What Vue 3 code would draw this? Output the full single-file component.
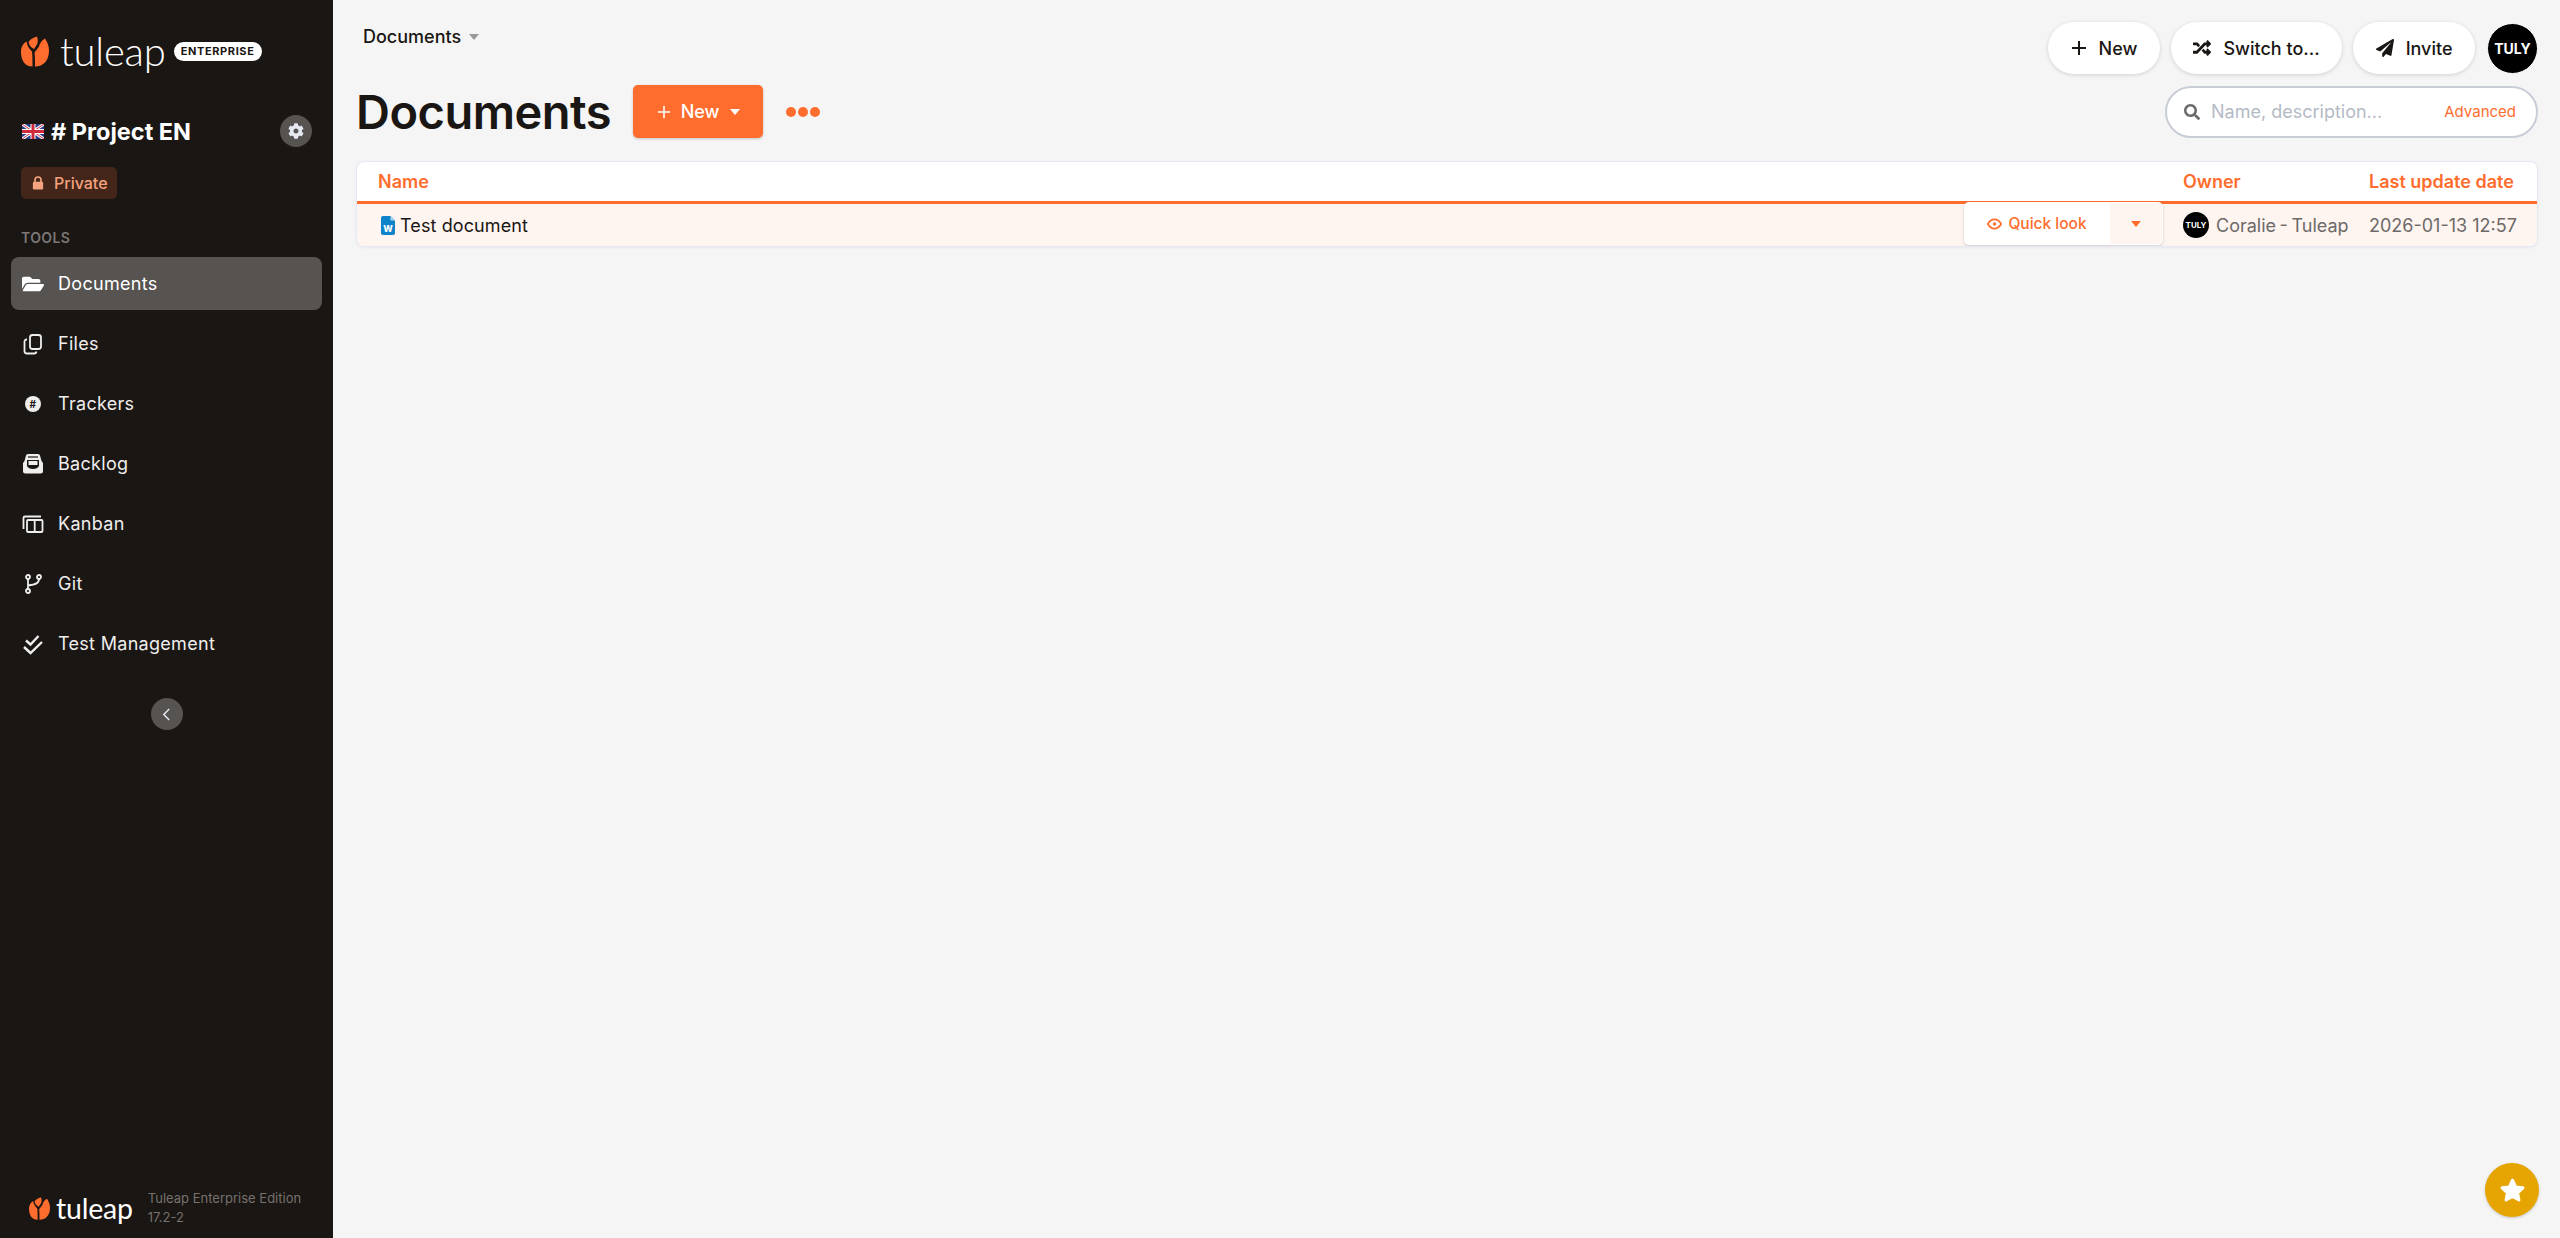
<template>
  <div class="layout">
    <aside class="sidebar">
      <div class="brand">
        <svg class="tulip" viewBox="0 0 28 30">
          <path d="M11.500 30C4 30 0 24 0 15 0 11 2 7 5.500 5 6 9 8 12 11 15c.5 4 .5 10 .5 15z" fill="#ff6d2e" />
          <path d="M7.500 5.500C9 3 12 1 16 0c1 3 1 6 0 8l-3 4.500C10 11 8 9 7.500 5.500z" fill="#ff6d2e" />
          <path d="M14 30c8.500 0 14-6 14-16 0-5-2-9-4-12-3 1.500-5.500 5-6 8l-4.500 6c.5 4 .5 9 .5 14z" fill="#ff6d2e" />
        </svg>
        <span class="wordmark">tuleap</span>
        <span class="edition">ENTERPRISE</span>
      </div>

      <div class="project-row">
        <svg class="flag" viewBox="0 0 22 15">
          <rect width="22" height="15" rx="1.500" fill="#27408b" />
          <path d="M0 0l22 15M22 0L0 15" stroke="#fff" stroke-width="3" />
          <path d="M0 0l22 15M22 0L0 15" stroke="#cf2a3c" stroke-width="1" />
          <path d="M11 0v15M0 7.500h22" stroke="#fff" stroke-width="5" />
          <path d="M11 0v15M0 7.500h22" stroke="#cf2a3c" stroke-width="3" />
        </svg>
        <span class="project-name"># Project EN</span>
        <span class="round-btn gear">
          <svg viewBox="0 0 512 512" width="16" height="16"><path fill="#e6e8f2" d="M487.400 315.700l-42.600-24.600c4.300-23.200 4.300-47 0-70.200l42.600-24.600c4.900-2.800 7.100-8.600 5.500-14-11.100-35.600-30-67.800-54.700-94.600-3.800-4.100-10-5.100-14.800-2.300L380.800 110c-17.900-15.400-38.500-27.300-60.800-35.100V25.800c0-5.600-3.900-10.500-9.400-11.700-36.700-8.200-74.300-7.800-109.200 0-5.500 1.200-9.400 6.100-9.400 11.700V75c-22.200 7.900-42.800 19.800-60.800 35.100L88.700 85.500c-4.900-2.800-11-1.900-14.800 2.300-24.700 26.700-43.600 58.900-54.700 94.600-1.700 5.400.6 11.200 5.500 14L67.300 221c-4.300 23.200-4.300 47 0 70.200l-42.600 24.600c-4.900 2.800-7.100 8.600-5.500 14 11.100 35.600 30 67.800 54.700 94.600 3.800 4.100 10 5.100 14.800 2.300l42.600-24.600c17.900 15.400 38.500 27.300 60.800 35.100v49.200c0 5.600 3.900 10.500 9.400 11.700 36.700 8.200 74.300 7.800 109.200 0 5.500-1.200 9.400-6.100 9.400-11.700v-49.200c22.200-7.900 42.800-19.800 60.800-35.100l42.600 24.600c4.900 2.800 11 1.900 14.800-2.300 24.700-26.700 43.600-58.900 54.700-94.600 1.500-5.500-.7-11.300-5.600-14.100zM256 336c-44.100 0-80-35.900-80-80s35.900-80 80-80 80 35.900 80 80-35.900 80-80 80z" /></svg>
        </span>
      </div>

      <div class="private">
        <svg viewBox="0 0 14 16" width="12" height="14">
          <path d="M3.500 7V4.500a3.500 3.500 0 0 1 7 0V7" fill="none" stroke="#f5a27e" stroke-width="2" />
          <rect x="1" y="6.500" width="12" height="9" rx="1.500" fill="#f5a27e" />
        </svg>
        Private
      </div>

      <div class="tools-title">TOOLS</div>

      <nav class="tools">
        <a class="tool active">
          <svg class="tool-icon" viewBox="0 0 576 512"><path fill="currentColor" d="M572.694 292.093L500.270 416.248A63.997 63.997 0 0 1 444.989 448H45.025c-18.523 0-30.064-20.093-20.731-36.093l72.424-124.155A64 64 0 0 1 152 256h399.964c18.523 0 30.064 20.093 20.730 36.093zM152 224h328v-48c0-26.510-21.490-48-48-48H272l-64-64H48C21.490 64 0 85.490 0 112v278.046l69.077-118.418C86.214 242.250 117.989 224 152 224z" /></svg>
          Documents
        </a>
        <a class="tool">
          <svg class="tool-icon" viewBox="0 0 22 22" fill="none" stroke="currentColor" stroke-width="1.800">
            <rect x="8" y="2" width="11" height="14" rx="2.500" />
            <path d="M5 6.500H4.500A2 2 0 0 0 2.500 8.500V18a2.500 2.500 0 0 0 2.500 2.500h7a2.500 2.500 0 0 0 2.500-2" />
          </svg>
          Files
        </a>
        <a class="tool">
          <svg class="tool-icon" viewBox="0 0 22 22">
            <circle cx="11" cy="11" r="8" fill="currentColor" />
            <text x="11" y="14.500" class="hash">#</text>
          </svg>
          Trackers
        </a>
        <a class="tool">
          <svg class="tool-icon" viewBox="0 0 22 22">
            <path fill="currentColor" d="M2.500 8L4 2.500A2 2 0 0 1 6 1h10a2 2 0 0 1 2 1.500L19.500 8l1.500 2v8a2.500 2.500 0 0 1-2.500 2.500h-15A2.500 2.500 0 0 1 1 18v-8z" />
            <path d="M6 4h10" stroke="#1a1613" stroke-width="1.200" />
            <path d="M5 7h12v6c-1 2-3 3-6 3s-5-1-6-3z" fill="#1a1613" />
            <path d="M6.500 8h9v4h-9z" fill="currentColor" />
          </svg>
          Backlog
        </a>
        <a class="tool">
          <svg class="tool-icon" viewBox="0 0 22 22" fill="none" stroke="currentColor" stroke-width="1.800">
            <path d="M1.500 16V5A1.500 1.500 0 0 1 3 3.500h16" />
            <rect x="5" y="7" width="15.500" height="12" rx="1" />
            <path d="M12.700 7v12" />
          </svg>
          Kanban
        </a>
        <a class="tool">
          <svg class="tool-icon" viewBox="0 0 22 22" fill="none" stroke="currentColor" stroke-width="1.800">
            <circle cx="6" cy="4" r="2" />
            <circle cx="6" cy="18" r="2" />
            <circle cx="17" cy="4" r="2" />
            <path d="M6 6v10M17 6c0 4-3 5.500-11 6.500" />
          </svg>
          Git
        </a>
        <a class="tool">
          <svg class="tool-icon" viewBox="0 0 22 22" fill="none" stroke="currentColor" stroke-width="2.400">
            <path d="M4 7.500l4.500 4L16.500 3M2 14l6.500 6L20 9" />
          </svg>
          Test Management
        </a>
      </nav>

      <div class="collapse-row">
        <span class="round-btn">
          <svg viewBox="0 0 10 16" width="9" height="15" fill="none" stroke="#e6e8f2" stroke-width="1.600"><path d="M8 2L2 8l6 6" /></svg>
        </span>
      </div>

      <div class="side-footer">
        <svg class="tulip small" viewBox="0 0 28 30">
          <path d="M11.500 30C4 30 0 24 0 15 0 11 2 7 5.500 5 6 9 8 12 11 15c.5 4 .5 10 .5 15z" fill="#ff6d2e" />
          <path d="M7.500 5.500C9 3 12 1 16 0c1 3 1 6 0 8l-3 4.500C10 11 8 9 7.500 5.500z" fill="#ff6d2e" />
          <path d="M14 30c8.500 0 14-6 14-16 0-5-2-9-4-12-3 1.500-5.500 5-6 8l-4.500 6c.5 4 .5 9 .5 14z" fill="#ff6d2e" />
        </svg>
        <span class="wordmark small">tuleap</span>
        <div class="version">Tuleap Enterprise Edition<br />17.2-2</div>
      </div>
    </aside>

    <main class="content">
      <div class="top-row">
        <div class="breadcrumb">Documents <span class="caret gray"></span></div>
        <div class="top-actions">
          <button class="pill">
            <svg viewBox="0 0 16 16" width="16" height="16" fill="none" stroke="currentColor" stroke-width="2"><path d="M8 1v14M1 8h14" /></svg>
            New
          </button>
          <button class="pill">
            <svg viewBox="0 0 512 512" width="18" height="18"><path fill="currentColor" d="M504.971 359.029c9.373 9.373 9.373 24.569 0 33.941l-80 79.984c-15.010 15.010-40.971 4.490-40.971-16.971V416h-58.785a12.004 12.004 0 0 1-8.773-3.812l-70.556-75.596 53.333-57.143L352 336h32v-39.981c0-21.438 25.943-31.998 40.971-16.971l80 79.981zM12 176h84l52.781 56.551 53.333-57.143-70.556-75.596A11.999 11.999 0 0 0 122.785 96H12c-6.627 0-12 5.373-12 12v56c0 6.627 5.373 12 12 12zm372 0v39.984c0 21.460 25.961 31.980 40.971 16.971l80-79.984c9.373-9.373 9.373-24.569 0-33.941l-80-79.981C409.943 24.021 384 34.582 384 56.019V96h-58.785a12.004 12.004 0 0 0-8.773 3.812L96 336H12c-6.627 0-12 5.373-12 12v56c0 6.627 5.373 12 12 12h110.785c3.326 0 6.503-1.381 8.773-3.812L352 176h32z" /></svg>
            Switch to...
          </button>
          <button class="pill">
            <svg viewBox="0 0 512 512" width="18" height="18"><path fill="currentColor" d="M476 3.200L12.500 270.600c-18.100 10.400-15.800 35.600 2.200 43.200L121 358.400l287.300-253.200c5.500-4.900 13.300 2.600 8.600 8.300L176 407v80.500c0 23.600 28.500 32.900 42.500 15.800L282 426l124.600 52.200c14.200 6 30.400-2.900 33-18.200l72-432C515 7.800 493.300-6.800 476 3.200z" /></svg>
            Invite
          </button>
          <div class="avatar">TULY</div>
        </div>
      </div>

      <div class="title-row">
        <h1 class="title">Documents</h1>
        <button class="new-btn">
          <svg viewBox="0 0 16 16" width="14" height="14" fill="none" stroke="#fff" stroke-width="1.800"><path d="M8 1v14M1 8h14" /></svg>
          New
          <span class="caret white"></span>
        </button>
        <div class="dots"><i></i><i></i><i></i></div>
        <div class="search">
          <svg viewBox="0 0 512 512" width="16" height="16"><path fill="#6b6b6b" d="M505 442.700L405.300 343c-4.500-4.500-10.600-7-17-7H372c27.600-35.300 44-79.700 44-128C416 93.100 322.900 0 208 0S0 93.100 0 208s93.100 208 208 208c48.300 0 92.700-16.400 128-44v16.300c0 6.400 2.500 12.500 7 17l99.700 99.700c9.400 9.400 24.600 9.400 33.900 0l28.300-28.300c9.400-9.400 9.400-24.600.1-34zM208 336c-70.700 0-128-57.200-128-128 0-70.700 57.200-128 128-128 70.700 0 128 57.200 128 128 0 70.700-57.200 128-128 128z" /></svg>
          <span class="search-placeholder">Name, description...</span>
          <span class="search-link">Advanced</span>
        </div>
      </div>

      <section class="doc-table">
        <div class="doc-head">
          <div>Name</div>
          <div>Owner</div>
          <div>Last update date</div>
        </div>
        <div class="doc-row">
          <div class="doc-name">
            <svg class="word-icon" viewBox="0 0 14 19">
              <path d="M2 0h7.500L14 4.500V17a2 2 0 0 1-2 2H2a2 2 0 0 1-2-2V2a2 2 0 0 1 2-2z" fill="#0f83c9" />
              <path d="M9.500 0v4.500H14z" fill="#a9d8f2" />
              <text x="7" y="16" class="word-w">W</text>
            </svg>
            Test document
          </div>
          <div class="doc-owner">
            <span class="mini-avatar">TULY</span>
            Coralie - Tuleap
          </div>
          <div class="doc-date">2026-01-13 12:57</div>

          <div class="quick-look">
            <span class="ql-main">
              <svg viewBox="0 0 18 14" width="15" height="12" fill="none" stroke="currentColor" stroke-width="2">
                <path d="M1 7c2-3.500 5-5.500 8-5.500s6 2 8 5.500c-2 3.500-5 5.500-8 5.500S3 10.500 1 7z" />
                <circle cx="9" cy="7" r="2" fill="currentColor" stroke="none" />
              </svg>
              Quick look
            </span>
            <span class="ql-more"><span class="caret orange"></span></span>
          </div>
        </div>
      </section>
    </main>

    <button class="star-btn">
      <svg viewBox="0 0 24 24" width="29" height="29"><path fill="#fff" stroke="#fff" stroke-width="2.500" stroke-linejoin="round" d="M12 3.500l2.600 5.500 6 .8-4.400 4.100 1.100 5.900-5.300-2.900-5.300 2.900 1.100-5.900-4.400-4.100 6-.8z" /></svg>
    </button>
  </div>
</template>

<script setup>
</script>

<style>
html,
body {
  margin: 0;
  background: #f5f5f5;
}
</style>

<style scoped>
.layout {
  display: flex;
  min-height: 100vh;
  font-family: Inter, 'Noto Sans', sans-serif;
  color: #1a1613;
}

/* Sidebar */
.sidebar {
  width: 333px;
  box-sizing: border-box;
  flex-shrink: 0;
  background: #1a1613;
  color: #fff;
  display: flex;
  flex-direction: column;
  padding: 35px 11px 0 11px;
}

.brand {
  display: flex;
  align-items: center;
  padding-left: 10px;
  height: 32px;
}

.tulip {
  width: 28px;
  height: 31px;
  flex-shrink: 0;
}

.tulip.small {
  width: 21px;
  height: 23px;
}

.wordmark {
  font-family: Lato, sans-serif;
  font-weight: 300;
  font-size: 40px;
  line-height: 32px;
  margin-left: 11px;
  letter-spacing: -0.2px;
}

.wordmark.small {
  font-size: 28.5px;
  margin-left: 6px;
  font-weight: 400;
  letter-spacing: -0.2px;
}

.edition {
  margin-left: 8px;
  background: #fff;
  color: #1a1613;
  border-radius: 10px;
  height: 19px;
  width: 88px;
  font-size: 11px;
  font-weight: 700;
  letter-spacing: 0.6px;
  display: flex;
  align-items: center;
  justify-content: center;
}

.project-row {
  display: flex;
  align-items: center;
  margin-top: 48px;
  padding-left: 11px;
  height: 32px;
}

.flag {
  width: 22px;
  height: 15px;
  margin-right: 7px;
}

.project-name {
  font-size: 23.5px;
  font-weight: 700;
  flex: 1;
}

.round-btn {
  width: 32px;
  height: 32px;
  border-radius: 50%;
  background: #565351;
  display: flex;
  align-items: center;
  justify-content: center;
}

.gear {
  margin-right: 10px;
}

.private {
  margin: 20px 0 0 10px;
  width: 96px;
  height: 32px;
  box-sizing: border-box;
  background: #432619;
  color: #f5a27e;
  border-radius: 5px;
  font-size: 16px;
  font-weight: 500;
  display: flex;
  align-items: center;
  gap: 10px;
  padding-left: 11px;
}

.tools-title {
  margin: 30px 0 0 10px;
  font-size: 14px;
  font-weight: 600;
  color: #7a7775;
  line-height: 18px;
  letter-spacing: 0.4px;
}

.tools {
  margin-top: 10px;
  display: flex;
  flex-direction: column;
  gap: 7px;
}

.tool {
  display: flex;
  align-items: center;
  height: 53px;
  padding-left: 11px;
  border-radius: 8px;
  font-size: 18px;
  font-weight: 400;
  color: #f0eeed;
  letter-spacing: 0.3px;
}

.tool.active {
  background: #565351;
  color: #fff;
}

.tool-icon {
  width: 22px;
  height: 22px;
  margin-right: 14px;
  flex-shrink: 0;
}

.hash {
  font-size: 10px;
  font-weight: 700;
  text-anchor: middle;
  fill: #1a1613;
}

.collapse-row {
  display: flex;
  justify-content: center;
  margin-top: 28px;
}

.side-footer {
  margin-top: auto;
  display: flex;
  align-items: center;
  padding: 0 0 11px 18px;
}

.version {
  margin-left: 15px;
  font-size: 13px;
  line-height: 19px;
  color: #77716d;
  white-space: nowrap;
}

/* Main */
.content {
  flex: 1;
  min-width: 0;
  padding: 22px 22px 0 23px;
}

.top-row {
  display: flex;
  justify-content: space-between;
  height: 52px;
}

.breadcrumb {
  align-self: flex-start;
  margin: 4px 0 0 7px;
  font-size: 18px;
  font-weight: 500;
  line-height: 22px;
  display: flex;
  align-items: center;
  gap: 8px;
}

.caret {
  display: inline-block;
  width: 0;
  height: 0;
  border-left: 5px solid transparent;
  border-right: 5px solid transparent;
  border-top: 6px solid #999;
}

.caret.white {
  border-top-color: #fff;
}

.caret.orange {
  border-top-color: #ff6d2e;
}

.top-actions {
  display: flex;
  gap: 11px;
  align-items: center;
}

.pill {
  height: 52px;
  border: none;
  border-radius: 26px;
  background: #fff;
  box-shadow: 0 1px 4px rgba(0, 0, 0, 0.15);
  padding: 0 22.5px;
  display: flex;
  align-items: center;
  gap: 12px;
  font-family: inherit;
  font-size: 18px;
  font-weight: 500;
  color: #1a1613;
}

.avatar {
  width: 51px;
  height: 51px;
  margin-left: 1px;
  border-radius: 50%;
  background: #000;
  color: #fff;
  border: 1px solid #fff;
  box-sizing: border-box;
  display: flex;
  align-items: center;
  justify-content: center;
  font-size: 14px;
  font-weight: 700;
}

.title-row {
  display: flex;
  align-items: center;
  margin-top: 11px;
  height: 53px;
}

.title {
  margin: 0;
  font-size: 47px;
  font-weight: 600;
  line-height: 53px;
  letter-spacing: -0.5px;
}

.new-btn {
  margin-left: 22px;
  width: 130px;
  height: 53px;
  border: none;
  border-radius: 5px;
  background: #ff6d2e;
  color: #fff;
  box-shadow: 0 1px 3px rgba(0, 0, 0, 0.2);
  font-family: inherit;
  font-size: 18px;
  font-weight: 500;
  display: flex;
  align-items: center;
  justify-content: center;
  gap: 10px;
}

.dots {
  margin-left: 23px;
  display: flex;
  gap: 2px;
}

.dots i {
  width: 10px;
  height: 10px;
  border-radius: 50%;
  background: #ff6d2e;
}

.search {
  margin-left: auto;
  width: 373px;
  height: 52px;
  box-sizing: border-box;
  border: 2px solid #c9cdd6;
  border-radius: 26px;
  background: #fff;
  display: flex;
  align-items: center;
  padding: 0 20px 0 17px;
  gap: 11px;
}

.search-placeholder {
  flex: 1;
  font-size: 18px;
  color: #b4bac6;
}

.search-link {
  font-size: 15px;
  color: #ff6d2e;
}

.doc-table {
  margin-top: 23px;
  border: 1px solid #e4e8f6;
  border-radius: 8px;
  background: #fff;
  box-shadow: 0 1px 3px rgba(0, 0, 0, 0.05);
  overflow: hidden;
}

.doc-head,
.doc-row {
  display: grid;
  grid-template-columns: 1fr 186px 168px;
  align-items: center;
  padding-left: 21px;
}

.doc-head {
  height: 39px;
  border-bottom: 3px solid #ff6d2e;
  color: #ff6d2e;
  font-size: 18px;
  font-weight: 600;
}

.doc-row {
  position: relative;
  height: 42px;
  background: #fef4f0;
  font-size: 18px;
}

.doc-name {
  display: flex;
  align-items: center;
  gap: 5px;
  padding-left: 3px;
  letter-spacing: 0.1px;
}

.word-icon {
  width: 14px;
  height: 19px;
}

.word-w {
  font-size: 9px;
  font-weight: 800;
  text-anchor: middle;
  fill: #fff;
}

.doc-owner {
  display: flex;
  align-items: center;
  gap: 7px;
  color: #6d6a68;
  white-space: nowrap;
  word-spacing: -1.5px;
}

.mini-avatar {
  width: 26px;
  height: 26px;
  border-radius: 50%;
  background: #000;
  color: #fff;
  font-size: 8px;
  font-weight: 700;
  display: flex;
  align-items: center;
  justify-content: center;
}

.doc-date {
  color: #6d6a68;
  white-space: nowrap;
}

/* Action button sits over the row, at the end of the name column */
.quick-look {
  position: absolute;
  right: 374px;
  top: -2px;
  width: 199px;
  height: 43px;
  border-radius: 5px;
  background: #fff;
  box-shadow: 0 1px 3px rgba(0, 0, 0, 0.18);
  display: flex;
  color: #ff6d2e;
  font-size: 15.5px;
  font-weight: 500;
}

.ql-main {
  flex: 1;
  display: flex;
  align-items: center;
  justify-content: center;
  gap: 6px;
}

.ql-more {
  width: 52px;
  margin: 1px 1px 1px 0;
  background: #fef4f0;
  border-radius: 0 4px 4px 0;
  display: flex;
  align-items: center;
  justify-content: center;
}

.star-btn {
  position: fixed;
  right: 21px;
  bottom: 21px;
  width: 54px;
  height: 54px;
  border: none;
  border-radius: 50%;
  background: #e5a400;
  box-shadow: 0 1px 3px rgba(0, 0, 0, 0.2);
  display: flex;
  align-items: center;
  justify-content: center;
  padding: 0;
}
</style>
